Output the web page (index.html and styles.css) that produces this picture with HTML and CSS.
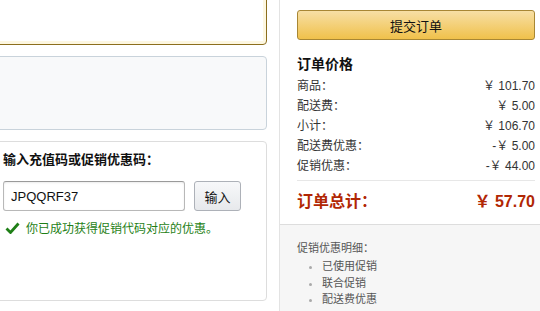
FILE: index.html
```html
<!DOCTYPE html>
<html lang="zh-CN">
<head>
    <meta charset="UTF-8">
    <title>提交订单</title>
    <link rel="stylesheet" href="styles.css">
</head>
<body>
    <div class="page">
        <div class="main-col">
            <div class="box box-address"></div>
            <div class="box box-shipping"></div>
            <div class="box box-promo">
                <h4>输入充值码或促销优惠码：</h4>
                <div class="promo-row">
                    <input type="text" class="promo-input" value="JPQQRF37">
                    <button type="button" class="promo-btn">输入</button>
                </div>
                <p class="promo-ok">
                    <svg class="check" width="15" height="12" viewBox="0 0 15 12">
                        <path d="M1.5 6.5 L5.5 10.5 L13.5 1.5" fill="none" stroke="#1f7f17" stroke-width="2.8"/>
                    </svg>
                    你已成功获得促销代码对应的优惠。
                </p>
            </div>
            <div class="box box-next"></div>
        </div>

        <div class="side-col">
            <div class="summary">
                <button type="button" class="submit-btn">提交订单</button>
                <h3>订单价格</h3>
                <div class="price-row"><span>商品：</span><span>￥ 101.70</span></div>
                <div class="price-row"><span>配送费：</span><span>￥ 5.00</span></div>
                <div class="price-row"><span>小计：</span><span>￥ 106.70</span></div>
                <div class="price-row"><span>配送费优惠：</span><span>-￥ 5.00</span></div>
                <div class="price-row"><span>促销优惠：</span><span>-￥ 44.00</span></div>
                <div class="total-row"><span>订单总计：</span><span>￥ 57.70</span></div>
            </div>
            <div class="promo-detail">
                <p>促销优惠明细：</p>
                <ul>
                    <li>已使用促销</li>
                    <li>联合促销</li>
                    <li>配送费优惠</li>
                </ul>
            </div>
        </div>
    </div>
</body>
</html>
```

FILE: styles.css
```css
body {
    margin: 0;
    background-color: #ffffff;
    font-family: "Liberation Sans", Arial, "Noto Sans CJK SC", sans-serif;
    color: #333333;
    overflow: hidden;
}
.page {
    display: flex;
    align-items: flex-start;
    height: 311px;
    overflow: hidden;
}
.main-col {
    width: 281px;
    margin-left: -14px;
    margin-top: -20px;
    flex-shrink: 0;
}
.box {
    box-sizing: border-box;
    border: 1px solid #dddddd;
    border-radius: 4px;
    background-color: #ffffff;
    margin-bottom: 11px;
}
.box-address {
    height: 65px;
    border-color: #8c6e1d;
    box-shadow: inset 0 0 0 3px #fdf7e1;
}
.box-shipping {
    height: 74px;
    border-color: #c9d3db;
    background-color: #f8f9fa;
}
.box-promo {
    height: 160px;
    padding: 10px 16px 0 16px;
}
.box-promo h4 {
    margin: 0 0 13px 0;
    font-size: 13px;
    font-weight: bold;
    color: #111111;
    line-height: 16px;
}
.promo-row {
    display: flex;
    gap: 9px;
}
.promo-input {
    box-sizing: border-box;
    width: 182px;
    height: 30px;
    padding: 0 7px;
    border: 1px solid #b8b8b8;
    border-top-color: #9a9a9a;
    border-radius: 3px;
    box-shadow: inset 0 1px 2px rgba(0, 0, 0, 0.08);
    font-family: "Liberation Sans", Arial, sans-serif;
    font-size: 13px;
    color: #111111;
}
.promo-btn {
    box-sizing: border-box;
    width: 47px;
    height: 30px;
    border: 1px solid #adb1b8;
    border-radius: 3px;
    background: linear-gradient(#f7f8fa, #e7e9ec);
    font-family: "Noto Sans CJK SC", sans-serif;
    font-size: 13px;
    color: #111111;
}
.promo-ok {
    display: flex;
    align-items: center;
    gap: 6px;
    margin: 8px 0 0 2px;
    font-family: "Noto Sans CJK SC", sans-serif;
    font-size: 12px;
    color: #1f7f17;
}
.box-next {
    height: 40px;
}
.side-col {
    box-sizing: border-box;
    width: 261px;
    height: 311px;
    margin-left: 12px;
    border-left: 1px solid #e3e3e3;
    display: flex;
    flex-direction: column;
}
.summary {
    padding: 10px 5px 0 17px;
    height: 214px;
    border-bottom: 1px solid #dddddd;
}
.submit-btn {
    box-sizing: border-box;
    width: 238px;
    height: 30px;
    border: 1px solid #a88734;
    border-radius: 3px;
    background: linear-gradient(#f7dfa5, #f0c14b);
    font-family: "Noto Sans CJK SC", sans-serif;
    font-size: 13px;
    color: #111111;
}
.summary h3 {
    margin: 15px 0 3px 0;
    font-size: 14px;
    line-height: 18px;
    color: #111111;
}
.price-row {
    display: flex;
    justify-content: space-between;
    height: 20px;
    line-height: 20px;
    font-size: 12px;
}
.total-row {
    display: flex;
    justify-content: space-between;
    margin-top: 4px;
    padding-top: 7px;
    border-top: 1px solid #e7e7e7;
    font-size: 16px;
    font-weight: bold;
    color: #b12704;
}
.promo-detail {
    flex: 1;
    background-color: #f6f6f6;
    padding: 14px 0 0 17px;
    font-size: 11px;
    color: #555555;
}
.promo-detail p {
    margin: 0 0 3px 0;
}
.promo-detail ul {
    margin: 0;
    padding-left: 25px;
}
.promo-detail li {
    line-height: 16.5px;
}
.promo-detail li::marker {
    color: #aaaaaa;
}
```
